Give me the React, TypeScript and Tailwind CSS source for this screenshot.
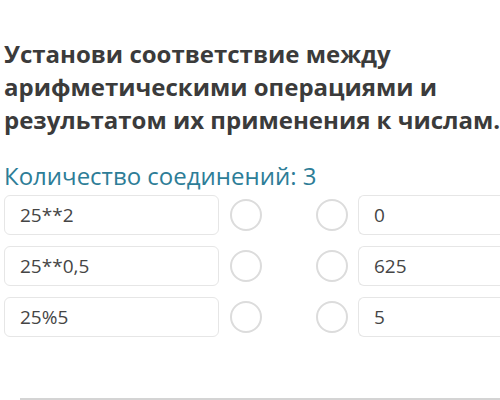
const rows = [
  { left: "25**2", right: "0" },
  { left: "25**0,5", right: "625" },
  { left: "25%5", right: "5" },
];

export default function App() {
  return (
    <div className="w-[500px] h-[400px] overflow-hidden bg-white font-['Open_Sans',sans-serif] relative">
      <div className="pt-[37px] pl-[4px]">
        <h1 className="text-[24px] leading-[33px] font-bold text-[#3b3b3b] whitespace-nowrap">
          Установи соответствие между
          <br />
          арифметическими операциями и
          <br />
          результатом их применения к числам.
        </h1>
        <p className="mt-[26px] text-[24px] leading-[28px] text-[#2d7d97] whitespace-nowrap">Количество соединений: 3</p>
      </div>
      <div className="mt-[5px] flex flex-col gap-[11px] pl-[4px]">
        {rows.map((r) => (
          <div key={r.left} className="flex items-center h-[40px]">
            <div className="w-[215px] h-full flex items-center px-[15px] border border-[#e6e6e6] rounded-[6px] text-[19px] text-[#454545]">
              {r.left}
            </div>
            <div className="ml-[11px] w-[32px] h-[32px] rounded-full border-2 border-[#dcdcdc]" />
            <div className="ml-[54px] w-[32px] h-[32px] rounded-full border-2 border-[#dcdcdc]" />
            <div className="ml-[10px] flex-1 h-full flex items-center px-[15px] border border-[#e6e6e6] rounded-l-[6px] border-r-0 text-[19px] text-[#454545]">
              {r.right}
            </div>
          </div>
        ))}
      </div>
      <div className="absolute left-[20px] right-0 bottom-0 h-[2px] bg-[#d4d4d4]" />
    </div>
  );
}
